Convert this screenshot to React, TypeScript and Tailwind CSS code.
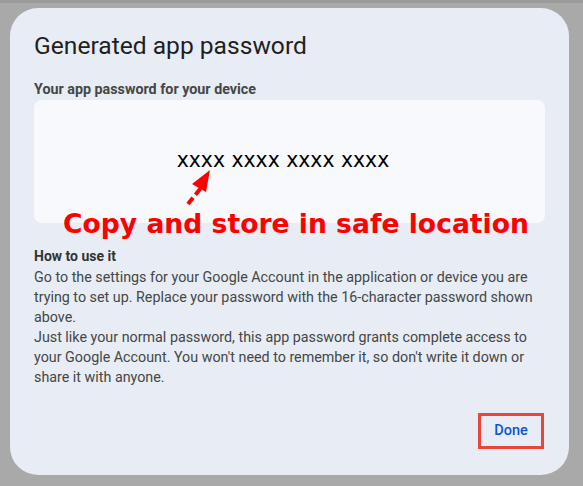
export default function App() {
  return (
    <div className="w-[583px] h-[486px] bg-[#a9a9a9] pt-2 pl-[10px] relative">
      <div className="absolute top-0 left-0 w-full h-[3px] bg-[#9b9b9b]" />
      <div
        className="relative w-[559px] h-[467px] rounded-[28px] bg-[#e8ecf4] px-6 pt-[24px] text-[#3c4043]"
        style={{ fontFamily: "Roboto, 'Open Sans', sans-serif" }}
      >
        <h2 className="text-[24.6px] leading-7 text-[#1f1f1f]">Generated app password</h2>

        <div className="mt-[20px] text-[14.3px] font-bold text-[#444746] leading-[18px]">
          Your app password for your device
        </div>

        {/* password box */}
        <div className="relative mt-[2px] h-[123px] rounded-lg bg-[#f8f9fd] flex items-center justify-center">
          <span
            className="text-[20.4px] text-black -mt-[2px] -ml-[13px]"
            style={{ fontFamily: "'DejaVu Sans', Verdana, sans-serif" }}
          >
            xxxx xxxx xxxx xxxx
          </span>
          <svg
            className="absolute left-[148px] top-[66px]"
            width="34"
            height="40"
            viewBox="0 0 34 40"
          >
            <line
              x1="6"
              y1="38"
              x2="22"
              y2="18"
              stroke="#ff0000"
              strokeWidth="4"
              strokeDasharray="8 4"
            />
            <polygon points="28,4 10,18 24,26" fill="#ff0000" />
          </svg>
          <div
            className="absolute left-[29px] top-[108px] text-[26.6px] font-bold text-[#ff0000] leading-8 whitespace-nowrap"
            style={{ fontFamily: "'DejaVu Sans', Verdana, sans-serif" }}
          >
            Copy and store in safe location
          </div>
        </div>

        <div className="mt-[23px] text-[14px] font-bold text-[#333] leading-5">How to use it</div>
        <p className="mt-px text-[14.3px] leading-[20px] text-[#444746]">
          Go to the settings for your Google Account in the application or device you are
          trying to set up. Replace your password with the 16-character password shown
          above.
          <br />
          Just like your normal password, this app password grants complete access to your
          Google Account. You won't need to remember it, so don't write it down or share it
          with anyone.
        </p>

        <div className="absolute right-[25px] bottom-[26px] w-[66px] h-[36px] border-[3px] border-[#e8453c] flex items-center justify-center">
          <span className="text-[14.5px] font-medium text-[#0b57d0]">Done</span>
        </div>
      </div>
    </div>
  );
}
